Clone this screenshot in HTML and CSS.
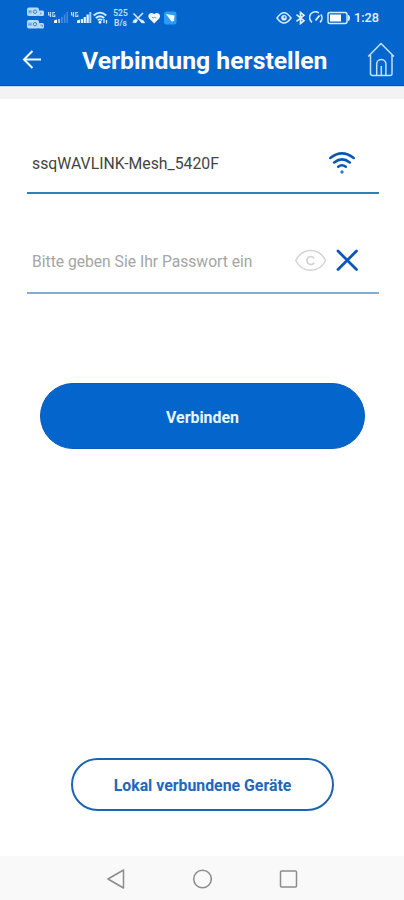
FILE: index.html
```html
<!DOCTYPE html>
<html lang="de">
<head>
<meta charset="utf-8">
<title>Verbindung herstellen</title>
<link rel="stylesheet" href="styles.css">
</head>
<body>
<div class="phone">
  <header class="top">
    <div class="status">
      <div class="status-left">
        <svg class="sims" width="18" height="24" viewBox="27 6 18 24">
          <g fill="#b8dcf8"><rect x="27" y="7.500" width="12" height="8.500" rx="2"/><rect x="38" y="10.500" width="6" height="5.500" rx="1.500"/><rect x="27" y="20" width="12" height="8.500" rx="2"/><rect x="38" y="23" width="6" height="5.500" rx="1.500"/></g>
          <g fill="none" stroke="#3483d5"><path d="M29 10v3.500M31 10v3.500M29 11.700h2M29 22.500v3.500M31 22.500v3.500M29 24.200h2" stroke-width=".7"/><circle cx="35" cy="11.700" r="1.700"/><circle cx="35" cy="24.200" r="1.700"/><path d="M40.700 12.500v2M40.500 25h1.800v2" stroke-width=".8"/></g>
        </svg>
        <svg class="signal" width="21" height="14" viewBox="48 11 21 14">
          <path d="M48.500 12v3h2.500M50.500 12v5M55 12.500H52.800v4h2v-2" fill="none" stroke="#b4daf7" stroke-width="1.200"/>
          <path d="M54 23v-2.500l3-1V23z" fill="#fff"/><path d="M58 19h2v4h-2z" fill="#9cc9ef"/><path d="M61 17h1.800v6H61zM63.800 14.500h1.800V23h-1.800zM66.500 12h1.500v11h-1.500z" fill="#3d8add"/>
        </svg>
        <svg class="signal" width="21" height="14" viewBox="48 11 21 14">
          <path d="M48.500 12v3h2.500M50.500 12v5M55 12.500H52.800v4h2v-2" fill="none" stroke="#b4daf7" stroke-width="1.200"/>
          <path d="M54 23v-2.500l3-1V23zM57.800 19h2.300v4h-2.300zM60.700 17h2.200v6h-2.200zM63.500 14.500h2.300V23h-2.300z" fill="#e4f3fd"/><path d="M66.300 12h2v11h-2z" fill="#acd2f2"/>
        </svg>
        <svg class="wifi-small" width="16" height="14" viewBox="93 11 16 14">
          <g fill="none" stroke="#d5ecfc" stroke-width="1.800"><path d="M93.700 15.500q6.300-5.800 12.600 0M95.800 18q4.200-3.600 8.400 0M97.800 20.300q2.200-1.800 4.400 0"/></g><circle cx="100" cy="22.300" r="1.400" fill="#fff"/><path d="M104 19v4M106.500 20v3.500" fill="none" stroke="#d5ecfc" stroke-width="1.300"/>
        </svg>
        <div class="rate"><span>525</span><span>B/s</span></div>
        <svg class="call" width="14" height="14" viewBox="132 11 14 14">
          <path d="M133.500 13.500l9 9M143 13l-6 6" fill="none" stroke="#d5ecfc" stroke-width="1.500"/><path d="M132.800 22.500q0-2.300 3.200-3.800l1.500 1.500-1.500 2.500zM140 19.500q4.300.5 4.600 3.500l-3.200-.3z" fill="#e4f3fd" stroke="#e4f3fd" stroke-width=".6"/>
        </svg>
        <svg class="heart" width="13" height="13" viewBox="148 12 13 13">
          <path d="M154.200 23.500l-5-5q-1.700-2.200 0-4.400 2.500-2.300 5 .2 2.500-2.500 5-.2 1.700 2.200 0 4.400z" fill="#f2faff"/><path d="M151.700 17l1.500 1 1.500-.7 1.500.7" fill="none" stroke="#4995de" stroke-width=".9"/>
        </svg>
        <svg class="app" width="13" height="14" viewBox="163 11 13 14">
          <rect x="163" y="11.500" width="12.500" height="13" rx="2.500" fill="#2b9df4"/><path d="M165 14l8.500 1.500-.5 5.500-2.500.5z" fill="#fff"/>
        </svg>
      </div>
      <div class="status-right">
        <svg width="16" height="14" viewBox="276 11 16 14"><path d="M277 18q7-10.500 14 0-7 10-14 0z" fill="none" stroke="#d5ecfc" stroke-width="1.500"/><circle cx="284" cy="17.800" r="2.800" fill="#d5ecfc"/><circle cx="284.500" cy="17.200" r="1" fill="#2c7ed4"/></svg>
        <svg class="bluetooth" width="11" height="14" viewBox="295 11 11 14"><path d="M296.500 14.700l7.500 6-3.500 2.800V12.500l3.500 2.800-7.500 6" fill="none" stroke="#e4f3fd" stroke-width="1.600"/></svg>
        <svg class="gauge" width="15" height="14" viewBox="309 11 15 14"><path d="M312 22.300a5.800 5.800 0 0 1 6.800-9.500M320.800 14.500a5.800 5.800 0 0 1-.8 7.800" fill="none" stroke="#d5ecfc" stroke-width="1.600"/><path d="M315.500 20.500l4-5" stroke="#e4f3fd" stroke-width="1.800"/></svg>
        <svg class="battery" width="24" height="14" viewBox="327 11 24 14"><rect x="328" y="12.500" width="19" height="11" rx="2" fill="none" stroke="#d5ecfc" stroke-width="1.500"/><rect x="330" y="14.500" width="11" height="7" fill="#fff"/><path d="M348 15q2 0 2 3t-2 3z" fill="#d5ecfc"/></svg>
        <span class="clock">1:28</span>
      </div>
    </div>
    <div class="bar">
      <svg class="back" width="20" height="20" viewBox="22 50 20 20"><path d="M41 59.500H24.500M32.500 51l-8.500 8.500 8.500 8.500" fill="none" stroke="#f0f8ff" stroke-width="2"/></svg>
      <h1>Verbindung herstellen</h1>
      <svg class="home" width="30" height="36" viewBox="366 42 30 36"><path d="M368.200 56.500L381 43.500l13 13M370.500 55v18.500q0 2 2 2h17.500q2 0 2-2V55M376.700 75V64a4.600 4.600 0 0 1 9.200 0v11M381.300 66v9" fill="none" stroke="#c4e1fa" stroke-width="1.500" stroke-linejoin="round"/></svg>
    </div>
  </header>
  <div class="strip"></div>
  <main>
    <div class="field network">
      <span class="value">ssqWAVLINK-Mesh_5420F</span>
      <svg class="wifi" width="28" height="24" viewBox="328 150 28 24"><g fill="none" stroke="#0b56b5" stroke-width="2.500" stroke-linecap="round"><path d="M330.300 157q11.700-9.200 23.400 0M334.200 161.500q7.800-6.200 15.600 0M338.200 165.800q3.800-3 7.600 0"/></g><circle cx="342" cy="171" r="1.700" fill="#3978c4"/></svg>
    </div>
    <div class="field password">
      <span class="placeholder">Bitte geben Sie Ihr Passwort ein</span>
      <svg class="eye" width="32" height="24" viewBox="295 248 32 24"><path d="M295.700 260.500Q301 250.500 310.700 250.500T325.700 260.500Q320.500 270.300 310.700 270.300T295.700 260.500z" fill="none" stroke="#d2d2d2" stroke-width="1.400"/><path d="M314.200 258.200a4 4 0 1 0 0 4.600" fill="none" stroke="#cfcfcf" stroke-width="1.600"/></svg>
      <svg class="clear" width="22" height="22" viewBox="336 249 22 22"><path d="M338 251l18.500 18.500M356.500 251L338 269.500" stroke="#0a57bb" stroke-width="2.800" stroke-linecap="round"/></svg>
    </div>
    <button class="connect">Verbinden</button>
    <button class="local">Lokal verbundene Geräte</button>
  </main>
  <nav>
    <svg width="20" height="22" viewBox="106 868 20 22"><path d="M123.500 870v18L108 879z"/></svg>
    <svg width="20" height="22" viewBox="192 868 20 22"><circle cx="202.500" cy="879" r="8.800"/></svg>
    <svg width="20" height="22" viewBox="278 868 20 22"><rect x="280.500" y="871" width="16" height="16" rx="1"/></svg>
  </nav>
</div>
</body>
</html>
```
FILE: styles.css
```css
* { box-sizing: border-box; }
body { margin: 0; background: #fff; font-family: Roboto, sans-serif; }
svg { display: block; flex: none; }
.phone { width: 404px; height: 900px; display: flex; flex-direction: column; }
.top { height: 86px; background: #0466cd; border-bottom: 1px solid #0458b4; }
.status { height: 36px; display: flex; justify-content: space-between; padding: 0 26px 0 27px; }
.status-left, .status-right { display: flex; align-items: center; height: 36px; }
.signal { margin-left: 3px; }
.signal + .signal { margin-left: 2px; }
.wifi-small { margin-left: 1px; }
.rate { display: flex; flex-direction: column; width: 15px; margin-left: 4px; font-size: 8.500px; line-height: 10px; font-weight: 700; color: #b9dcf7; text-align: center; white-space: nowrap; }
.call { margin-left: 4px; }
.heart { margin-left: 2px; }
.app { margin-left: 3px; }
.bluetooth { margin-left: 3px; }
.gauge { margin-left: 3px; }
.battery { margin-left: 3px; }
.clock { width: 24px; margin-left: 3px; font-size: 12.750px; line-height: 14px; font-weight: 500; color: #e4f3fd; white-space: nowrap; }
.bar { height: 48px; display: flex; align-items: center; padding: 0 8px 0 22px; }
.bar h1 { margin: 0 0 0 40px; width: 284px; font-size: 24.750px; line-height: 30px; font-weight: 700; color: #fff; white-space: nowrap; padding-top: 2px; }
.strip { height: 13px; background: #f3f3f3; border-top: 1px solid #c4daf0; }
main { height: 757px; display: flex; flex-direction: column; padding: 35px 25px 0 27px; }
.field { display: flex; align-items: center; padding-left: 5px; width: 352px; }
.network { height: 60px; border-bottom: 2px solid #2f80b3; }
.password { height: 66px; margin-top: 34px; border-bottom: 2px solid #83add6; }
.value, .placeholder { flex: none; white-space: nowrap; }
.value { width: 296px; font-size: 15.800px; color: #444; }
.placeholder { width: 263px; padding-top: 2px; font-size: 15.650px; color: #a5a5a5; }
.clear { margin-left: 9px; }
button { font-family: inherit; font-weight: 700; padding: 2px 0 0; }
.connect { width: 325px; height: 66px; margin: 89px 0 0 13px; border: 1px solid #0a5cb8; border-radius: 33px; background: #0466cd; color: #e9f5ff; font-size: 15.900px; }
.local { width: 263px; height: 53px; margin: 309px 0 0 44px; border: 2px solid #1c63b4; border-radius: 27px; background: #fff; color: #2168b8; font-size: 15.850px; }
nav { height: 44px; background: #f9f9f9; display: flex; gap: 66px; padding: 12px 0 0 106px; }
nav svg { fill: none; stroke: #8c8c8c; stroke-width: 1.500; stroke-linejoin: round; }
```
